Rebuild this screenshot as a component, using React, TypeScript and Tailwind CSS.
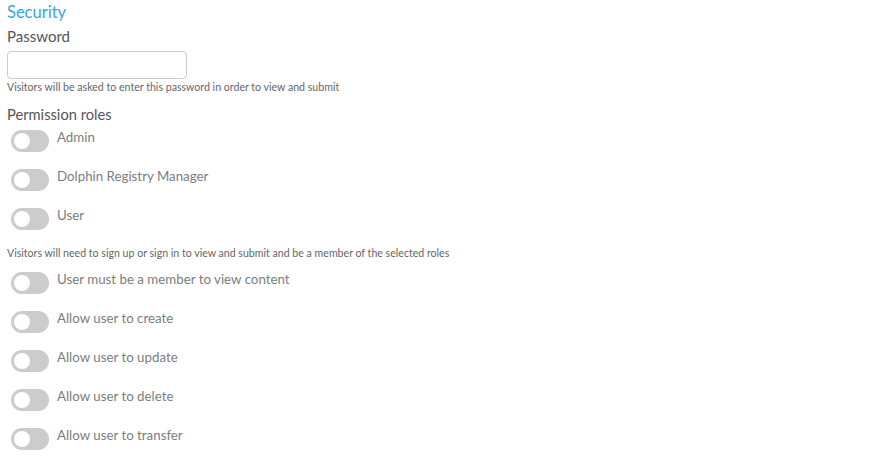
import React from "react";

function Toggle({ label }: { label: string }) {
  return (
    <div className="flex items-start">
      <div className="ml-[4px] w-[38px] h-[22px] rounded-full bg-[#cccccc] relative shrink-0">
        <div className="absolute left-[3px] top-[3px] w-[16px] h-[16px] rounded-full bg-white" />
      </div>
      <div className="ml-[8px] text-[13.3px] leading-[15px] text-[#7d7d7d]">{label}</div>
    </div>
  );
}

export default function App() {
  return (
    <div className="bg-white w-[886px] h-[463px] px-[7px] pt-[2px] font-['Lato','Open_Sans',sans-serif]">
      <div className="text-[16.5px] leading-[20px] text-[#33a8dc]">Security</div>
      <div className="mt-[4px] text-[15px] leading-[20px] text-[#555555]">Password</div>
      <input
        type="password"
        className="mt-[5px] block w-[180px] h-[28px] rounded-[4px] border border-[#cccccc] bg-white outline-none"
      />
      <div className="mt-[1px] text-[10.6px] leading-[14px] text-[#666666]">
        Visitors will be asked to enter this password in order to view and submit
      </div>
      <div className="mt-[10px] text-[14.7px] leading-[20px] text-[#555555]">Permission roles</div>
      <div className="mt-[6px] flex flex-col gap-[17px]">
        <Toggle label="Admin" />
        <Toggle label="Dolphin Registry Manager" />
        <Toggle label="User" />
      </div>
      <div className="mt-[16px] text-[10.6px] leading-[14px] text-[#666666]">
        Visitors will need to sign up or sign in to view and submit and be a member of the selected roles
      </div>
      <div className="mt-[12px] flex flex-col gap-[17px]">
        <Toggle label="User must be a member to view content" />
        <Toggle label="Allow user to create" />
        <Toggle label="Allow user to update" />
        <Toggle label="Allow user to delete" />
        <Toggle label="Allow user to transfer" />
      </div>
    </div>
  );
}
